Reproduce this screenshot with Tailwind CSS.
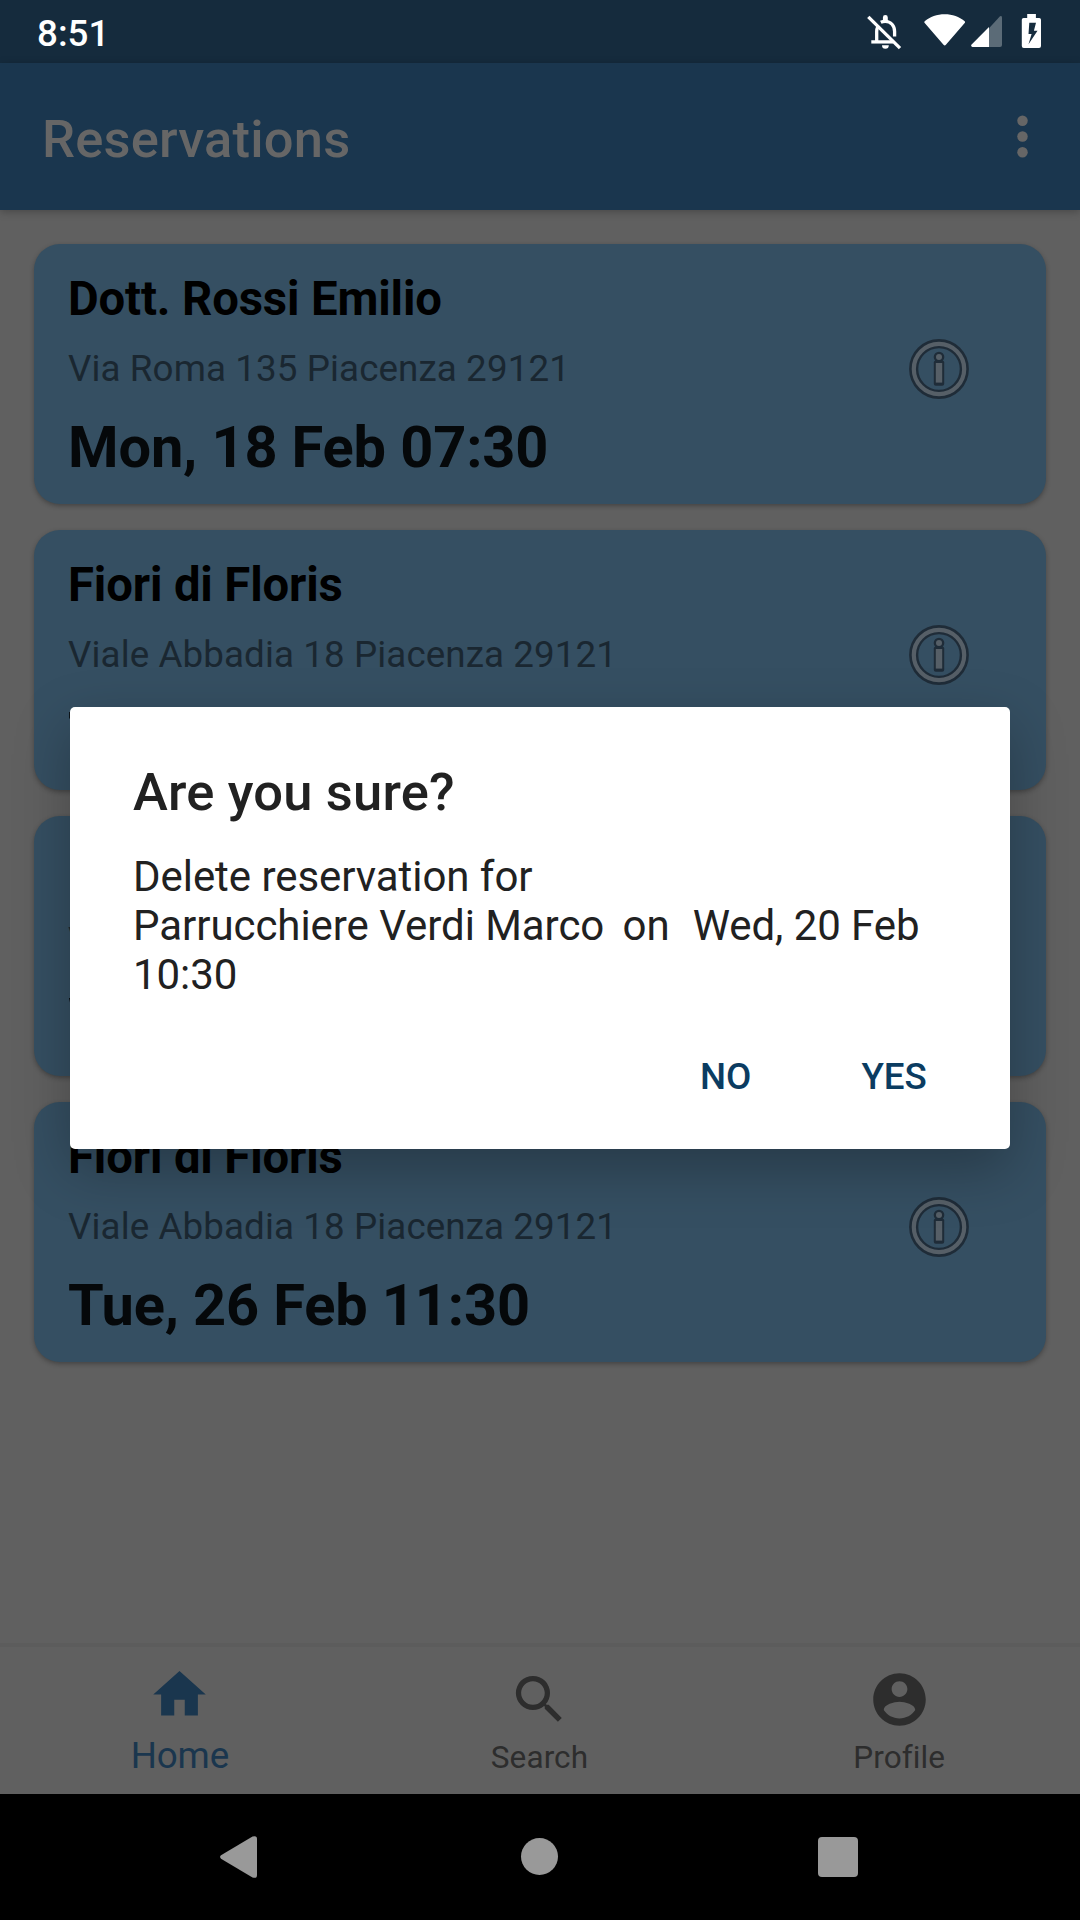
<!DOCTYPE html>
<html lang="en">
<head>
<meta charset="utf-8">
<title>Reservations</title>
<script src="https://cdn.jsdelivr.net/npm/@tailwindcss/browser@4"></script>
</head>
<body class="relative flex h-[1920px] w-[1080px] flex-col overflow-hidden bg-[#606060] font-['Roboto',sans-serif]">

  <!-- Status bar -->
  <header class="flex h-[63px] shrink-0 items-start justify-between bg-[#152b3d] pl-[37px] text-white">
    <span class="pt-[7px] text-[36.75px] leading-[54px] font-medium">8:51</span>
    <svg class="h-[63px] w-[220px]" viewBox="860 0 220 63" fill="#fff">
      <g fill="none" stroke="#fff" stroke-width="3.3">
        <path d="M868.3 16.8 900 48.2"/>
        <path d="M871.3 41.9H893"/>
        <path d="M876.7 41V31.500q0-2.600 1.100-4.800"/>
        <path d="M880.800 22.300q2-1 4.500-1c5.500 0 9.300 4.500 9.300 10.200V36.500"/>
      </g>
      <path d="M882.900 21v-3.500a2.450 2.450 0 0 1 4.900 0V21zM882 45.300h6.800a3.400 3.500 0 0 1-6.800 0z"/>
      <path d="M924.700 23c-.6-.8-.5-1.500.3-2.100C930 16.700 937 14.200 944.700 14.200s14.700 2.500 19.700 6.700c.8.600.9 1.300.3 2.100L945.900 44.800q-1.200 1.200-2.400 0z"/>
      <path fill="#5b6b77" d="M989 28.200 1000 16.300q2-1.200 2 1.200V45q0 2-2 2H989z"/>
      <path d="M989 27V47H972.300q-2-.6-.9-2.200z"/>
      <path fill-rule="evenodd" d="M1027.200 14h8.700v4h3.300q1.800 0 1.800 1.800V46q0 2-2 2h-15.200q-2 0-2-2V19.800q0-1.800 1.800-1.800h3.600zM1029.300 22.700 1028.500 34h3.100L1028.500 44.200 1037.500 30.700h-3.600L1036 22.700z"/>
    </svg>
  </header>

  <!-- App bar -->
  <div class="flex h-[147px] shrink-0 items-center justify-between bg-[#1a364e] pr-[26px] pl-[42px] text-[#666] shadow-[0_2px_8px_rgba(0,0,0,0.25)]">
    <h1 class="pt-[4px] text-[52.5px] leading-[62px] font-medium tracking-[0.18px]">Reservations</h1>
    <svg class="h-[63px] w-[63px]" viewBox="0 0 24 24" fill="#666"><circle cx="12" cy="6" r="2"/><circle cx="12" cy="12" r="2"/><circle cx="12" cy="18" r="2"/></svg>
  </div>

  <svg class="hidden">
    <symbol id="info" viewBox="0 0 60 60">
      <circle cx="30" cy="30" r="25.3" fill="none" stroke="#1f2c38" stroke-width="9.200"/>
      <circle cx="30" cy="30" r="25.2" fill="none" stroke="#565f67" stroke-width="4.200"/>
      <circle cx="30" cy="18" r="5.300" fill="#1f2c38"/>
      <rect x="24.800" y="21.500" width="10.400" height="25.200" rx="2" fill="#1f2c38"/>
      <circle cx="30" cy="18" r="3" fill="#565f67"/>
      <rect x="26.800" y="24" width="6.400" height="19.600" fill="#565f67"/>
    </symbol>
  </svg>

  <!-- Reservation list -->
  <main class="flex grow flex-col gap-[26px] px-[34px] pt-[34px]">
    <article class="flex h-[260px] items-center justify-between rounded-[26px] bg-[#354f62] pr-[77px] pl-[34px] shadow-[0_2px_5px_rgba(0,0,0,0.3)]">
      <div class="flex h-[206px] flex-col whitespace-nowrap">
        <h2 class="text-[47.25px] leading-[56px] font-bold tracking-[-0.13px] text-black">Dott. Rossi Emilio</h2>
        <p class="mt-[20px] text-[36.75px] leading-[44px] tracking-[0.1px] text-[#1a2731]">Via Roma 135 Piacenza 29121</p>
        <p class="mt-[22px] text-[57.75px] leading-[68px] font-bold tracking-[-0.14px] text-[#05080a]">Mon, 18 Feb 07:30</p>
      </div>
      <svg class="mt-[-10px] h-[60px] w-[60px]"><use href="#info"/></svg>
    </article>
    <article class="flex h-[260px] items-center justify-between rounded-[26px] bg-[#354f62] pr-[77px] pl-[34px] shadow-[0_2px_5px_rgba(0,0,0,0.3)]">
      <div class="flex h-[206px] flex-col whitespace-nowrap">
        <h2 class="text-[47.25px] leading-[56px] font-bold tracking-[-0.13px] text-black">Fiori di Floris</h2>
        <p class="mt-[20px] text-[36.75px] leading-[44px] tracking-[0.1px] text-[#1a2731]">Viale Abbadia 18 Piacenza 29121</p>
        <p class="mt-[22px] text-[57.75px] leading-[68px] font-bold tracking-[-0.14px] text-[#05080a]">Tue, 19 Feb 11:30</p>
      </div>
      <svg class="mt-[-10px] h-[60px] w-[60px]"><use href="#info"/></svg>
    </article>
    <article class="flex h-[260px] items-center justify-between rounded-[26px] bg-[#354f62] pr-[77px] pl-[34px] shadow-[0_2px_5px_rgba(0,0,0,0.3)]">
      <div class="flex h-[206px] flex-col whitespace-nowrap">
        <h2 class="text-[47.25px] leading-[56px] font-bold tracking-[-0.13px] text-black">Parrucchiere Verdi Marco</h2>
        <p class="mt-[20px] text-[36.75px] leading-[44px] tracking-[0.1px] text-[#1a2731]">Via Piacenza 29121</p>
        <p class="mt-[22px] text-[57.75px] leading-[68px] font-bold tracking-[-0.14px] text-[#05080a]">Wed, 20 Feb 10:30</p>
      </div>
      <svg class="mt-[-10px] h-[60px] w-[60px]"><use href="#info"/></svg>
    </article>
    <article class="flex h-[260px] items-center justify-between rounded-[26px] bg-[#354f62] pr-[77px] pl-[34px] shadow-[0_2px_5px_rgba(0,0,0,0.3)]">
      <div class="flex h-[206px] flex-col whitespace-nowrap">
        <h2 class="text-[47.25px] leading-[56px] font-bold tracking-[-0.13px] text-black">Fiori di Floris</h2>
        <p class="mt-[20px] text-[36.75px] leading-[44px] tracking-[0.1px] text-[#1a2731]">Viale Abbadia 18 Piacenza 29121</p>
        <p class="mt-[22px] text-[57.75px] leading-[68px] font-bold tracking-[-0.14px] text-[#05080a]">Tue, 26 Feb 11:30</p>
      </div>
      <svg class="mt-[-10px] h-[60px] w-[60px]"><use href="#info"/></svg>
    </article>
  </main>

  <!-- Bottom navigation -->
  <nav class="grid h-[151px] shrink-0 grid-cols-3 border-t-4 border-[#5c5c5c] bg-[#606060] pr-px text-[31.5px] leading-[38px] text-[#2d2d2d]">
    <div class="flex flex-col items-center pt-[16px] text-[36.75px] leading-[44px] text-[#1a364e]">
      <svg class="h-[63px] w-[63px]" viewBox="0 0 24 24" fill="currentColor"><path d="M10 20v-6h4v6h5v-8h3L12 3 2 12h3v8z"/></svg>
      <span class="mt-[8px] tracking-[-0.15px]">Home</span>
    </div>
    <div class="flex flex-col items-center pt-[21px]">
      <svg class="h-[63px] w-[63px]" viewBox="0 0 24 24" fill="currentColor"><path d="M15.5 14h-.79l-.28-.27A6.471 6.471 0 0 0 16 9.500 6.500 6.500 0 1 0 9.500 16c1.610 0 3.090-.59 4.230-1.570l.27.28v.79l5 4.990L20.490 19l-4.990-5zm-6 0C7.010 14 5 11.990 5 9.500S7.010 5 9.500 5 14 7.010 14 9.500 11.990 14 9.500 14z"/></svg>
      <span class="mt-[8px] tracking-[0.1px]">Search</span>
    </div>
    <div class="flex flex-col items-center pt-[21px]">
      <svg class="h-[63px] w-[63px]" viewBox="0 0 24 24" fill="currentColor"><path d="M12 2C6.480 2 2 6.480 2 12s4.480 10 10 10 10-4.480 10-10S17.520 2 12 2zm0 3c1.660 0 3 1.340 3 3s-1.340 3-3 3-3-1.340-3-3 1.340-3 3-3zm0 14.200c-2.500 0-4.710-1.280-6-3.220.03-1.990 4-3.080 6-3.080 1.990 0 5.970 1.090 6 3.080-1.290 1.940-3.500 3.220-6 3.220z"/></svg>
      <span class="mt-[8px] tracking-[0.1px]">Profile</span>
    </div>
  </nav>

  <!-- System navigation -->
  <footer class="flex h-[126px] shrink-0 items-center bg-black pl-[220px]">
    <svg class="h-[42px] w-[37px]" viewBox="0 0 37 42" fill="#999"><path d="M1 19.300 32.500.6Q37-1 37 3V39q0 4-4.500 2.400L1 22.700Q-.8 21 1 19.300z"/></svg>
    <div class="mb-px ml-[264px] h-[37px] w-[37px] rounded-full bg-[#999]"></div>
    <div class="ml-[260px] h-[40px] w-[40px] rounded-[4px] bg-[#999]"></div>
  </footer>

  <!-- Confirmation dialog -->
  <section role="dialog" class="absolute top-[707px] left-[70px] flex h-[442px] w-[940px] flex-col rounded-[5px] bg-white px-[63px] pt-[54px] text-[#212121] shadow-[0_20px_56px_rgba(0,0,0,0.27)]">
    <h2 class="text-[52.5px] leading-[62px] font-medium tracking-[0.18px]">Are you sure?</h2>
    <p class="mt-[29px] text-[42px] leading-[49px] tracking-[-0.05px] whitespace-pre">Delete reservation for
Parrucchiere Verdi Marco  <span class="-ml-[2.4px]">on</span>  &#8202;<span class="-ml-[2px]">Wed, 20 Feb</span>
10:30</p>
    <div class="mt-[56px] flex gap-[110px] pl-[567px] text-[36.75px] leading-[44px] font-medium text-[#0b3c61]">
      <button class="text-left">NO</button>
      <button class="text-left">YES</button>
    </div>
  </section>
</body>
</html>
